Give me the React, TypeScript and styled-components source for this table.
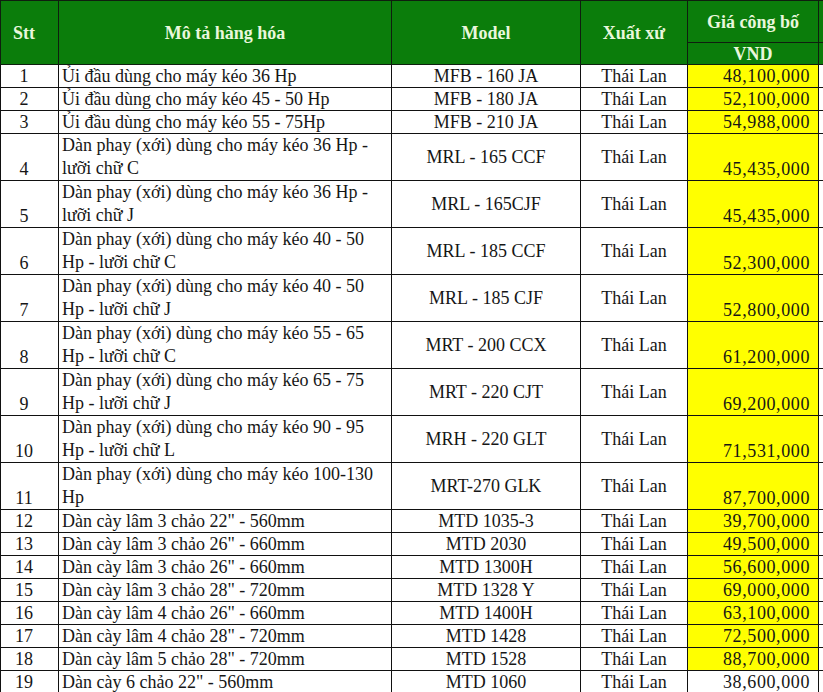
import React from "react";
import styled, { createGlobalStyle } from "styled-components";

const Global = createGlobalStyle`
  html, body {
    margin: 0;
    padding: 0;
    background: #ffffff;
    overflow: hidden;
  }
  body {
    font-family: "Liberation Serif", "Times New Roman", serif;
  }
`;

const Sheet = styled.table`
  border-collapse: collapse;
  table-layout: fixed;
  width: 830px;
  font-family: "Liberation Serif", "Times New Roman", serif;
  font-size: 18px;
  color: #161616;
`;

const HeadCell = styled.th<{ $h?: number }>`
  background: #0b7d0b;
  color: #e9f7dc;
  font-weight: bold;
  font-size: 18px;
  line-height: 20px;
  border: 1px solid #0f1f0f;
  text-align: center;
  vertical-align: middle;
  padding: 0;
  height: ${(p) => p.$h ?? 20}px;
  white-space: nowrap;
`;

const Row = styled.tr<{ $tall?: boolean }>`
  height: ${(p) => (p.$tall ? 47 : 23)}px;
`;

const Cell = styled.td`
  border: 1px solid #111;
  padding: 0;
  padding-top: 1px;
  line-height: 21px;
  white-space: nowrap;
`;

const SttCell = styled(Cell)`
  text-align: center;
  vertical-align: bottom;
  padding-right: 11px;
`;

const DescCell = styled(Cell)<{ $tall?: boolean }>`
  text-align: left;
  vertical-align: middle;
  padding-left: 3px;
  padding-top: ${(p) => (p.$tall ? 0 : 1)}px;
  white-space: normal;
  line-height: ${(p) => (p.$tall ? 23 : 21)}px;
`;

const ModelCell = styled(Cell)`
  text-align: center;
  vertical-align: middle;
`;

const OriginCell = styled(Cell)`
  text-align: center;
  vertical-align: middle;
`;

const PriceCell = styled(Cell)<{ $hi: boolean }>`
  background: ${(p) => (p.$hi ? "#ffff00" : "#ffffff")};
  text-align: right;
  vertical-align: bottom;
  padding-right: 8px;
  letter-spacing: 0.6px;
`;

const EdgeCell = styled(Cell)`
  border-right: none;
`;

type Item = {
  no: number;
  desc: string[];
  model: string;
  price: string;
  hi?: boolean;
};

const items: Item[] = [
  { no: 1, desc: ["Ủi đầu dùng cho máy kéo 36 Hp"], model: "MFB - 160 JA", price: "48,100,000", hi: true },
  { no: 2, desc: ["Ủi đầu dùng cho máy kéo 45 - 50 Hp"], model: "MFB - 180 JA", price: "52,100,000", hi: true },
  { no: 3, desc: ["Ủi đầu dùng cho máy kéo 55 - 75Hp"], model: "MFB - 210 JA", price: "54,988,000", hi: true },
  { no: 4, desc: ["Dàn phay (xới) dùng cho máy kéo 36 Hp -", "lưỡi chữ C"], model: "MRL - 165 CCF", price: "45,435,000", hi: true },
  { no: 5, desc: ["Dàn phay (xới) dùng cho máy kéo 36 Hp -", "lưỡi chữ J"], model: "MRL - 165CJF", price: "45,435,000", hi: true },
  { no: 6, desc: ["Dàn phay (xới) dùng cho máy kéo 40 - 50", "Hp - lưỡi chữ C"], model: "MRL - 185 CCF", price: "52,300,000", hi: true },
  { no: 7, desc: ["Dàn phay (xới) dùng cho máy kéo 40 - 50", "Hp - lưỡi chữ J"], model: "MRL - 185 CJF", price: "52,800,000", hi: true },
  { no: 8, desc: ["Dàn phay (xới) dùng cho máy kéo 55 - 65", "Hp - lưỡi chữ C"], model: "MRT - 200 CCX", price: "61,200,000", hi: true },
  { no: 9, desc: ["Dàn phay (xới) dùng cho máy kéo 65 - 75", "Hp - lưỡi chữ J"], model: "MRT - 220 CJT", price: "69,200,000", hi: true },
  { no: 10, desc: ["Dàn phay (xới) dùng cho máy kéo 90 - 95", "Hp - lưỡi chữ L"], model: "MRH - 220 GLT", price: "71,531,000", hi: true },
  { no: 11, desc: ["Dàn phay (xới) dùng cho máy kéo 100-130", "Hp"], model: "MRT-270 GLK", price: "87,700,000", hi: true },
  { no: 12, desc: ["Dàn cày lâm 3 chảo 22\" - 560mm"], model: "MTD 1035-3", price: "39,700,000", hi: true },
  { no: 13, desc: ["Dàn cày lâm 3 chảo 26\" - 660mm"], model: "MTD 2030", price: "49,500,000", hi: true },
  { no: 14, desc: ["Dàn cày lâm 3 chảo 26\" - 660mm"], model: "MTD 1300H", price: "56,600,000", hi: true },
  { no: 15, desc: ["Dàn cày lâm 3 chảo 28\" - 720mm"], model: "MTD 1328 Y", price: "69,000,000", hi: true },
  { no: 16, desc: ["Dàn cày lâm 4 chảo 26\" - 660mm"], model: "MTD 1400H", price: "63,100,000", hi: true },
  { no: 17, desc: ["Dàn cày lâm 4 chảo 28\" - 720mm"], model: "MTD 1428", price: "72,500,000", hi: true },
  { no: 18, desc: ["Dàn cày lâm 5 chảo 28\" - 720mm"], model: "MTD 1528", price: "88,700,000", hi: true },
  { no: 19, desc: ["Dàn cày 6 chảo 22\" - 560mm"], model: "MTD 1060", price: "38,600,000", hi: false },
];

export default function App() {
  return (
    <>
      <Global />
      <Sheet>
        <colgroup>
          <col style={{ width: 58 }} />
          <col style={{ width: 333 }} />
          <col style={{ width: 189 }} />
          <col style={{ width: 107 }} />
          <col style={{ width: 131 }} />
          <col style={{ width: 12 }} />
        </colgroup>
        <thead>
          <tr>
            <HeadCell rowSpan={2} $h={41} style={{ paddingRight: 11 }}>Stt</HeadCell>
            <HeadCell rowSpan={2} $h={41}>Mô tả hàng hóa</HeadCell>
            <HeadCell rowSpan={2} $h={41}>Model</HeadCell>
            <HeadCell rowSpan={2} $h={41}>Xuất xứ</HeadCell>
            <HeadCell $h={41}>Giá công bố</HeadCell>
            <HeadCell $h={41}></HeadCell>
          </tr>
          <tr>
            <HeadCell $h={21}>VND</HeadCell>
            <HeadCell $h={21}></HeadCell>
          </tr>
        </thead>
        <tbody>
          {items.map((it) => (
            <Row key={it.no} $tall={it.desc.length > 1}>
              <SttCell>{it.no}</SttCell>
              <DescCell $tall={it.desc.length > 1}>
                {it.desc.map((d, i) => (
                  <React.Fragment key={i}>
                    {i > 0 && <br />}
                    {d}
                  </React.Fragment>
                ))}
              </DescCell>
              <ModelCell>{it.model}</ModelCell>
              <OriginCell>Thái Lan</OriginCell>
              <PriceCell $hi={!!it.hi}>{it.price}</PriceCell>
              <EdgeCell />
            </Row>
          ))}
        </tbody>
      </Sheet>
    </>
  );
}
